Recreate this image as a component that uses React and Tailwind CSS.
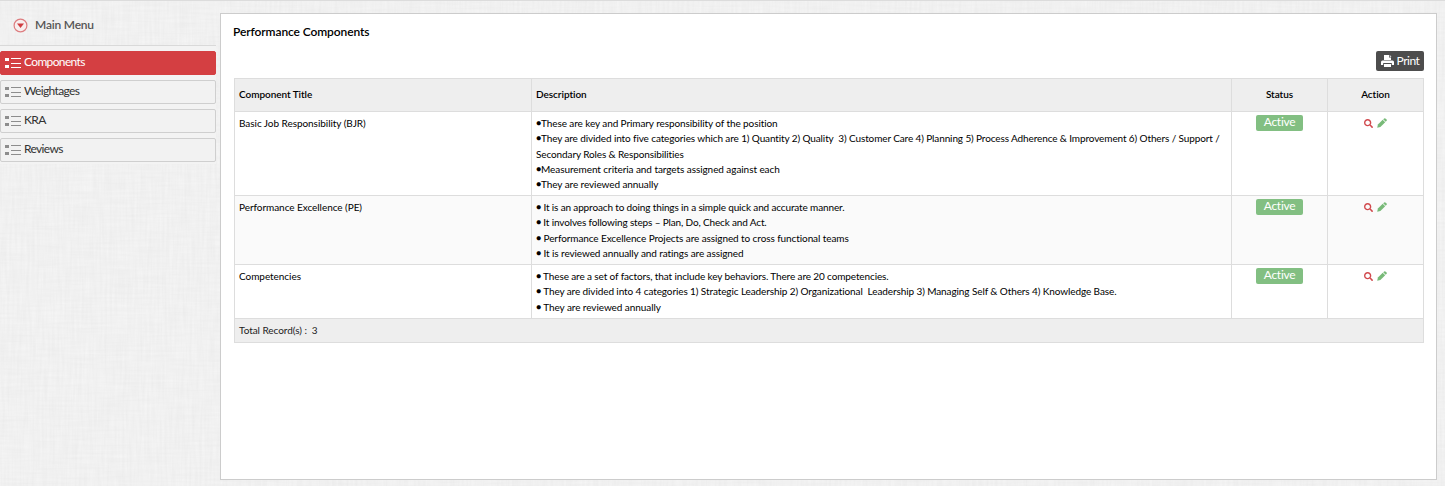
import React from "react";
import { FaSearch } from "react-icons/fa";

const menu = ["Components", "Weightages", "KRA", "Reviews"];

const rows = [
  {
    title: "Basic Job Responsibility (BJR)",
    height: "h-[84px]",
    bg: "bg-white",
    bulletGap: "",
    actionPad: "pt-[6px]",
    lines: [
      ["These are key and Primary responsibility of the position", "tracking-[-0.09px]"],
      ["They are divided into five categories which are 1) Quantity 2) Quality\u00a0 3) Customer Care 4) Planning 5) Process Adherence & Improvement 6) Others / Support / Secondary Roles & Responsibilities", "tracking-[-0.115px]"],
      ["Measurement criteria and targets assigned against each", "tracking-[-0.07px]"],
      ["They are reviewed annually", "tracking-[-0.08px]"],
    ],
  },
  {
    title: "Performance Excellence (PE)",
    height: "h-[69px]",
    bg: "bg-[#fafafa]",
    bulletGap: " ",
    actionPad: "pt-[6px]",
    lines: [
      ["It is an approach to doing things in a simple quick and accurate manner.", "tracking-[-0.14px]"],
      ["It involves following steps – Plan, Do, Check and Act.", "tracking-[-0.15px]"],
      ["Performance Excellence Projects are assigned to cross functional teams", "tracking-[-0.09px]"],
      ["It is reviewed annually and ratings are assigned", "tracking-[-0.09px]"],
    ],
  },
  {
    title: "Competencies",
    height: "h-[54px]",
    bg: "bg-white",
    bulletGap: " ",
    actionPad: "pt-[6px]",
    lines: [
      ["These are a set of factors, that include key behaviors. There are 20 competencies.", "tracking-[-0.12px]"],
      ["They are divided into 4 categories 1) Strategic Leadership 2) Organizational\u00a0 Leadership 3) Managing Self & Others 4) Knowledge Base.", "tracking-[-0.1px]"],
      ["They are reviewed annually", "tracking-[-0.07px]"],
    ],
  },
];

function Linen() {
  return (
    <svg className="absolute inset-0 h-full w-full" aria-hidden="true">
      <filter id="weft" x="0" y="0" width="100%" height="100%" colorInterpolationFilters="sRGB">
        <feTurbulence type="fractalNoise" baseFrequency="0.03 0.4" numOctaves="2" seed="4" />
        <feColorMatrix values="0.06 0 0 0 0.914  0.06 0 0 0 0.914  0.06 0 0 0 0.914  0 0 0 0 1" />
      </filter>
      <filter id="warp" x="0" y="0" width="100%" height="100%" colorInterpolationFilters="sRGB">
        <feTurbulence type="fractalNoise" baseFrequency="0.4 0.03" numOctaves="2" seed="9" />
        <feColorMatrix values="0.06 0 0 0 0.914  0.06 0 0 0 0.914  0.06 0 0 0 0.914  0 0 0 0 1" />
      </filter>
      <rect width="100%" height="100%" filter="url(#weft)" />
      <rect width="100%" height="100%" filter="url(#warp)" opacity="0.5" />
    </svg>
  );
}

function ListIcon() {
  return (
    <svg width="16" height="12" viewBox="0 0 16 12" className="shrink-0 fill-current" aria-hidden="true">
      <rect x="0" y="1" width="4" height="3" />
      <rect x="0" y="8" width="4" height="3" />
      <rect x="6" y="1" width="10" height="1" />
      <rect x="6" y="6" width="10" height="1" />
      <rect x="6" y="10" width="10" height="1" />
    </svg>
  );
}

function PrintIcon() {
  return (
    <svg width="13" height="12" viewBox="0 0 13 12" fill="currentColor" aria-hidden="true">
      <path d="M3 0h5v2.5h2V5H3z" />
      <path d="M8.7 0 10.5 1.8H8.7z" />
      <path fillRule="evenodd" d="M1.5 5.5h10A1.5 1.5 0 0 1 13 7v3h-2.2V8H2.2v2H0V7a1.5 1.5 0 0 1 1.5-1.5z" />
      <path d="M3 9h7v3H3z" />
    </svg>
  );
}

function PencilIcon() {
  return (
    <svg width="10" height="10" viewBox="0 0 10 10" fill="#78ba78" aria-hidden="true">
      <path d="M0.2 9.8 0.9 6.6 5.7 1.8 8.2 4.3 3.4 9.1z" />
      <path d="M6.2 1.3 7.2 0.4Q7.8-0.1 8.4 0.4L9.6 1.6Q10.1 2.2 9.6 2.8L8.7 3.8z" />
    </svg>
  );
}

function Sidebar() {
  return (
    <aside className="w-[216px] shrink-0">
      <div className="flex h-[45px] items-center border-b border-[#d9d9d9] pt-[4px] pl-[13px]">
        <svg width="15" height="15" viewBox="0 0 15 15" aria-hidden="true">
          <circle cx="7.5" cy="7.5" r="6.4" fill="#f8eeee" stroke="#dd7c7f" strokeWidth="1.2" />
          <path d="M4 5.5h7L7.5 10z" fill="#cf3c40" />
        </svg>
        <span className="-mt-px ml-[7px] text-[12px] font-semibold tracking-[-0.2px] text-[#555]">Main Menu</span>
      </div>
      <nav className="flex flex-col gap-[5px] bg-[#f3f3f3] pt-[5px] pb-[2px]">
        {menu.map((item, i) => (
          <a
            key={item}
            className={
              "flex h-6 items-center gap-[3px] rounded-[2px] border pl-1 text-[12px] " +
              (i === 0 ? "border-[#d43f42] bg-[#d43f42] text-white" : "border-[#cfcfcf] bg-[#f2f2f2] text-[#8d8d8d]")
            }
          >
            <ListIcon />
            <span className={"-mt-[3px] tracking-[-0.65px] " + (i === 0 ? "text-white" : "text-[#333]")}>{item}</span>
          </a>
        ))}
      </nav>
    </aside>
  );
}

const cell = "border border-[#dddddd] align-top";

export default function App() {
  return (
    <div className="relative h-[486px] w-full overflow-hidden bg-[#f1f1f1] font-['Lato',sans-serif] text-black">
      <Linen />
      <div className="relative flex h-full border-t border-[#dcdcdc]">
        <Sidebar />
        <main className="mt-3 ml-1 h-[467px] w-[1217px] border border-[#cccccc] bg-white pr-3 pl-[13px]">
          <h1 className="-ml-px pt-[10px] text-[12px] leading-4 font-semibold tracking-[-0.1px]">Performance Components</h1>
          <div className="mt-[11px] flex justify-end">
            <button className="flex h-5 w-12 items-center justify-center gap-[3px] rounded-[2px] bg-[#4d4d4d] text-[12px] tracking-[-0.5px] text-white">
              <PrintIcon />
              Print
            </button>
          </div>
          <table className="mt-[7px] w-[1190px] table-fixed border-collapse text-[10px] leading-[15.3px]">
            <colgroup>
              <col className="w-[297px]" />
              <col className="w-[700px]" />
              <col className="w-[96px]" />
              <col className="w-[96px]" />
            </colgroup>
            <thead>
              <tr className="h-[33px] bg-[#eeeeee] text-left tracking-[-0.05px]">
                <th className="border border-[#dddddd] px-1 font-semibold">Component Title</th>
                <th className="border border-[#dddddd] px-1 font-semibold">Description</th>
                <th className="border border-[#dddddd] text-center font-semibold">Status</th>
                <th className="border border-[#dddddd] text-center font-semibold">Action</th>
              </tr>
            </thead>
            <tbody>
              {rows.map((r) => (
                <tr key={r.title} className={r.height + " " + r.bg}>
                  <td className={cell + " px-1 pt-1 tracking-[-0.05px]"}>{r.title}</td>
                  <td className={cell + " px-1 pt-1"}>
                    {r.lines.map(([text, tracking]) => (
                      <p key={text} className={tracking}>
                        <span className="align-[1px] text-[8.5px] leading-none">●</span>
                        {r.bulletGap + text}
                      </p>
                    ))}
                  </td>
                  <td className={cell + " pt-[3px]"}>
                    <div className="mx-auto flex h-4 w-[47px] items-center justify-center rounded-[2px] bg-[#82bf82] pb-[2px] text-[12px] tracking-[-0.3px] text-white">
                      Active
                    </div>
                  </td>
                  <td className={cell + " " + r.actionPad}>
                    <div className="flex items-center justify-center gap-1">
                      <FaSearch size={9} className="text-[#d14a4e]" />
                      <PencilIcon />
                    </div>
                  </td>
                </tr>
              ))}
            </tbody>
            <tfoot>
              <tr className="h-6 bg-[#eeeeee]">
                <td colSpan={4} className="border border-[#dddddd] px-1 tracking-[-0.05px] text-[#222]">
                  Total Record(s) :&nbsp; 3
                </td>
              </tr>
            </tfoot>
          </table>
        </main>
      </div>
    </div>
  );
}
